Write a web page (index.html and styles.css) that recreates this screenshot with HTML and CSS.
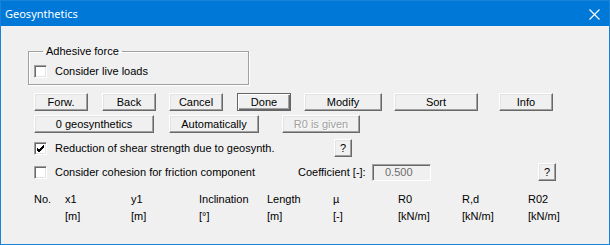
FILE: index.html
```html
<!DOCTYPE html>
<html lang="en">
<head>
  <meta charset="UTF-8" />
  <title>Geosynthetics</title>
  <link rel="stylesheet" href="styles.css">
</head>
<body>
  <div class="dialog">
    <div class="titlebar">
      <span class="title">Geosynthetics</span>
      <svg class="close" width="11" height="11" viewBox="0 0 11 11">
        <path d="M0.5 0.5 L10.5 10.5 M10.5 0.5 L0.5 10.5" stroke="#fff" stroke-width="1.1" fill="none"/>
      </svg>
    </div>
    <div class="content">
      <fieldset class="group">
        <legend>Adhesive force</legend>
        <div class="check-row">
          <span class="checkbox"></span>
          <span class="label">Consider live loads</span>
        </div>
      </fieldset>

      <div class="button-row first">
        <div class="button w54">Forw.</div>
        <div class="button w54 gap14">Back</div>
        <div class="button w54 gap13">Cancel</div>
        <div class="button w54 gap14 default">Done</div>
        <div class="button w78 gap13">Modify</div>
        <div class="button w84 gap12">Sort</div>
        <div class="button w54 gap21">Info</div>
      </div>
      <div class="button-row second">
        <div class="button w120">0 geosynthetics</div>
        <div class="button w90 gap15">Automatically</div>
        <div class="button w78 gap23 disabled">R0 is given</div>
      </div>

      <div class="option-row reduction">
        <span class="checkbox checked">
          <svg width="11" height="11" viewBox="0 0 11 11"><path d="M2 5 L4 7 L9 2 M2 6 L4 8 L9 3 M2 7 L4 9 L9 4" stroke="#000" stroke-width="1" fill="none"/></svg>
        </span>
        <span class="label">Reduction of shear strength due to geosynth.</span>
        <div class="button small">?</div>
      </div>

      <div class="option-row cohesion">
        <span class="checkbox"></span>
        <span class="label">Consider cohesion for friction component</span>
        <span class="coef-label">Coefficient [-]:</span>
        <div class="field">0.500</div>
        <div class="button small help-b">?</div>
      </div>

      <div class="columns">
        <span>No.</span><span>x1</span><span>y1</span><span>Inclination</span><span>Length</span><span>&micro;</span><span>R0</span><span>R,d</span><span>R02</span>
        <span></span><span>[m]</span><span>[m]</span><span>[°]</span><span>[m]</span><span>[-]</span><span>[kN/m]</span><span>[kN/m]</span><span>[kN/m]</span>
      </div>
    </div>
  </div>
</body>
</html>
```

FILE: styles.css
```css
body {
  margin: 0;
  background: #f0f0f0;
}
.dialog {
  width: 610px;
  height: 245px;
  box-sizing: border-box;
  border: 1px solid #1883d7;
  background: #f0f0f0;
  font-family: "Liberation Sans", Arial, sans-serif;
  font-size: 11px;
  color: #000;
}
.titlebar {
  height: 25px;
  background: #0078d7;
  color: #fff;
  display: flex;
  align-items: center;
  justify-content: space-between;
  padding: 0 9px 0 4px;
  font-family: "Noto Sans", sans-serif;
  font-size: 11px;
}
.close {
  margin-top: 1px;
}
.content {
  padding-left: 33px;
}
.group {
  margin: 19px 0 0 -6px;
  width: 221px;
  box-sizing: border-box;
  border: 1px solid #a0a0a0;
  box-shadow: inset 1px 1px #fff, 1px 1px #fff;
  padding: 7px 0 6px 5px;
}
.group legend {
  margin-left: 9px;
  padding: 0 3px;
  line-height: 13px;
}
.check-row, .option-row {
  display: flex;
  align-items: center;
}
.checkbox {
  flex: none;
  width: 13px;
  height: 13px;
  box-sizing: border-box;
  background: #fff;
  border: 1px solid;
  border-color: #a0a0a0 #fff #fff #a0a0a0;
  box-shadow: inset 1px 1px #696969, inset -1px -1px #e3e3e3;
  display: flex;
  align-items: center;
  justify-content: center;
}
.checkbox svg {
  display: block;
}
.label {
  margin-left: 8px;
  line-height: 13px;
}
.button-row {
  display: flex;
}
.button-row.first {
  margin-top: 8px;
}
.button-row.second {
  margin-top: 4px;
}
.button {
  flex: none;
  height: 18px;
  box-sizing: border-box;
  border: 1px solid;
  border-color: #fff #696969 #696969 #fff;
  box-shadow: inset -1px -1px #a0a0a0, inset 1px 1px #e3e3e3;
  background: #f0f0f0;
  display: flex;
  align-items: center;
  justify-content: center;
  line-height: 14px;
}
.button.default {
  border-color: #646464;
  box-shadow: inset 1px 1px #fff, inset -1px -1px #696969, inset -2px -2px #a0a0a0;
}
.button.disabled {
  color: #a0a0a0;
  text-shadow: 1px 1px #fff;
}
.w54 { width: 54px; }
.w78 { width: 78px; }
.w84 { width: 84px; }
.w90 { width: 90px; }
.w120 { width: 120px; }
.gap12 { margin-left: 12px; }
.gap13 { margin-left: 13px; }
.gap14 { margin-left: 14px; }
.gap15 { margin-left: 15px; }
.gap21 { margin-left: 21px; }
.gap23 { margin-left: 23px; }
.button.small {
  width: 18px;
}
.option-row.reduction {
  margin-top: 6px;
  height: 18px;
}
.reduction .label {
  width: 279px;
}
.option-row.cohesion {
  margin-top: 6px;
  height: 18px;
}
.cohesion .label {
  width: 243px;
}
.coef-label {
  width: 74px;
}
.field {
  width: 59px;
  height: 17px;
  box-sizing: border-box;
  border: 1px solid;
  border-color: #a0a0a0 #fff #fff #a0a0a0;
  box-shadow: inset 1px 1px #696969;
  color: #6d6d6d;
  line-height: 15px;
  padding-left: 12px;
}
.help-b {
  margin-left: 107px;
}
.columns {
  margin-top: 10px;
  display: grid;
  grid-template-columns: 31px 66px 68px 68px 66px 65px 64px 66px auto;
  line-height: 17px;
}
```
